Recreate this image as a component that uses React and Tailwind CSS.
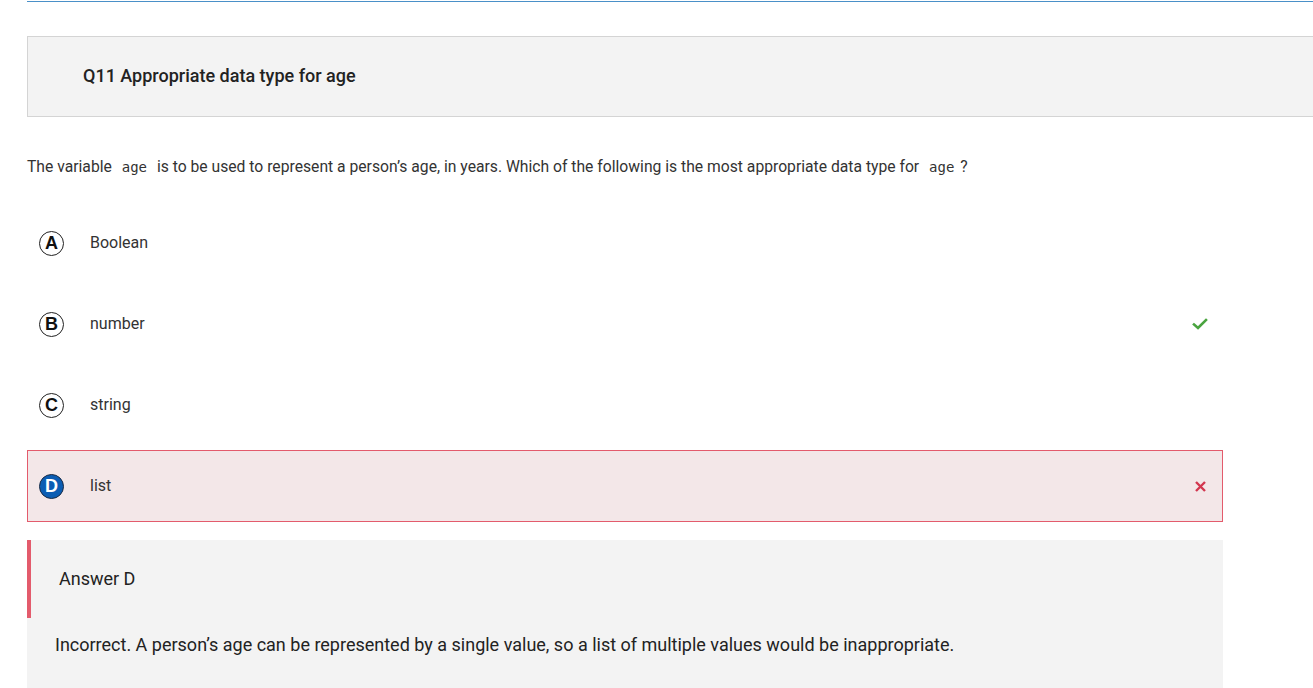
import React from "react";

function Letter({ l, selected }) {
  return selected ? (
    <div className="w-[25px] h-[25px] rounded-full bg-[#0b5db3] border border-[#1a2b44] flex items-center justify-center text-white font-bold text-[18px] leading-none shrink-0" style={{ fontFamily: "Arial, 'Liberation Sans', sans-serif" }}>
      {l}
    </div>
  ) : (
    <div className="w-[25px] h-[25px] rounded-full border border-[#222] bg-white flex items-center justify-center text-[#111] font-bold text-[18px] leading-none shrink-0" style={{ fontFamily: "Arial, 'Liberation Sans', sans-serif" }}>
      {l}
    </div>
  );
}

function Check() {
  return (
    <svg width="16" height="12" viewBox="0 0 16 12" className="shrink-0">
      <path d="M2 6.5 L6 10 L14 2" fill="none" stroke="#4aa43f" strokeWidth="2.6" strokeLinecap="square" />
    </svg>
  );
}

function Cross() {
  return (
    <svg width="13" height="13" viewBox="0 0 13 13" className="shrink-0">
      <path d="M2 2 L11 11 M11 2 L2 11" fill="none" stroke="#d2374f" strokeWidth="2.4" />
    </svg>
  );
}

function Row({ l, text, status, selected }) {
  return (
    <div
      className={
        "h-[72px] flex items-center pl-[11px] pr-[14px] border " +
        (selected ? "bg-[#f3e7e8] border-[#e35b6c]" : "bg-white border-transparent")
      }
    >
      <Letter l={l} selected={selected} />
      <span className="ml-[26px] text-[16px] text-[#333]">{text}</span>
      <div className="ml-auto flex items-center justify-center w-[16px]">
        {status === "ok" && <Check />}
        {status === "bad" && <Cross />}
      </div>
    </div>
  );
}

function Code({ children }) {
  return (
    <code className="px-[6px] text-[14px] text-[#333]" style={{ fontFamily: "'DejaVu Sans Mono', monospace" }}>
      {children}
    </code>
  );
}

export default function App() {
  return (
    <div className="w-full h-[688px] overflow-hidden bg-white" style={{ fontFamily: "Roboto, 'Liberation Sans', sans-serif" }}>
      <div className="pl-[27px]">
        <div className="mt-[1px] h-[1px] w-[1400px] bg-[#4a90c8]" />
        <div className="mt-[34px] w-[1400px] h-[81px] bg-[#f3f3f3] border border-[#d4d4d4] flex items-center pl-[55px]">
          <span className="text-[18px] font-medium text-[#222] -mt-[2px]">Q11 Appropriate data type for age</span>
        </div>
        <div className="w-[1196px]">
          <p className="mt-[40px] text-[15.7px] leading-[20px] text-[#333]">
            The variable <Code>age</Code> is to be used to represent a person’s age, in years. Which of the following is the most appropriate data type for <Code>age</Code>?
          </p>
          <div className="mt-[30px] flex flex-col gap-[9px]">
            <Row l="A" text="Boolean" />
            <Row l="B" text="number" status="ok" />
            <Row l="C" text="string" />
            <Row l="D" text="list" status="bad" selected />
          </div>
          <div className="mt-[18px] bg-[#f3f3f3] h-[200px]">
            <div className="h-[78px] border-l-4 border-[#e35b6c] flex items-center pl-[28px]">
              <span className="text-[18px] text-[#222] -mt-[2px]">Answer D</span>
            </div>
            <p className="pl-[28px] mt-[13px] text-[18px] text-[#222]">
              Incorrect. A person’s age can be represented by a single value, so a list of multiple values would be inappropriate.
            </p>
          </div>
        </div>
      </div>
    </div>
  );
}
